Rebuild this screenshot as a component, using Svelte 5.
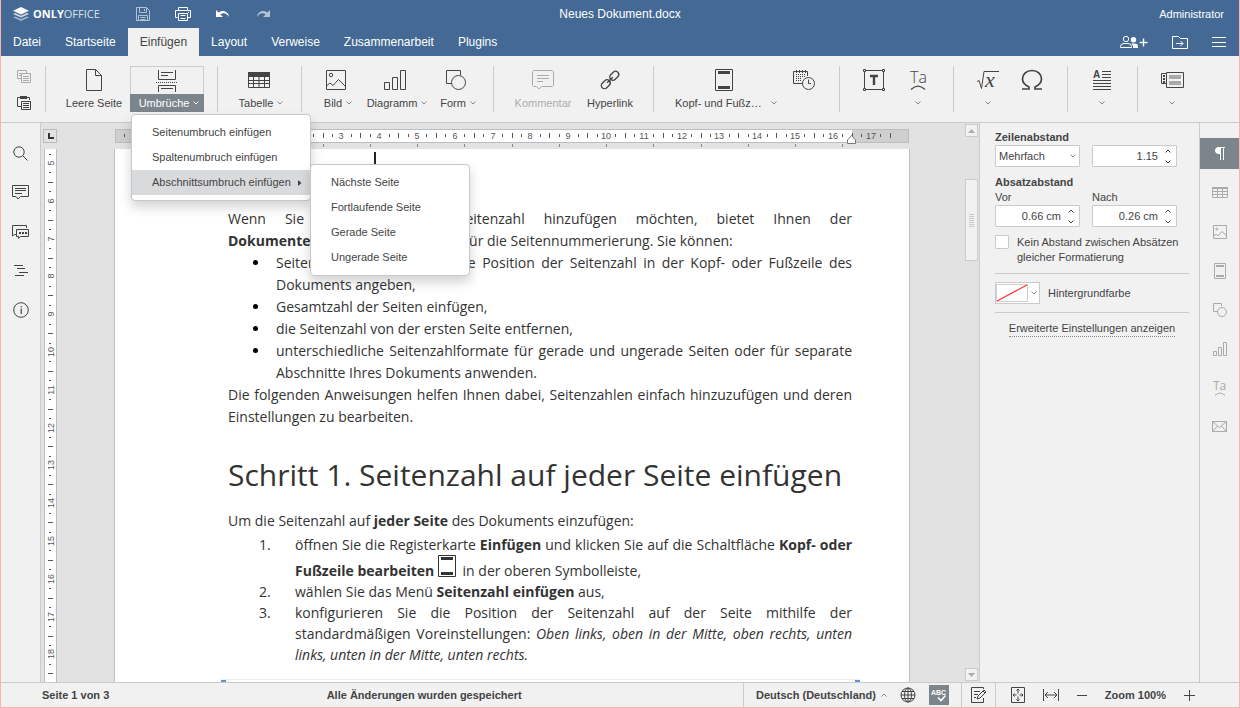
<script lang="ts">
  type Icon = { w: number; h: number; body: string };

  const line = 'fill="none" stroke="currentColor"';

  const icons: Record<string, Icon> = {
    logo: { w: 16, h: 14, body: '<path d="M8 0 16 3.7 8 7.4 0 3.7Z" fill="#fff"/><path d="M2 6 0 7 8 10.6 16 7 14 6 8 8.8Z" fill="#fff" opacity=".75"/><path d="M2 9.4 0 10.3 8 14 16 10.3 14 9.4 8 12.1Z" fill="#fff" opacity=".5"/>' },
    save: { w: 14, h: 14, body: `<path ${line} d="M.5.5H10.5L13.5 3.5V13.5H.5ZM3.5.5V5.5H10.5V.5M8.5 2V4M2.5 13.5V8.5H11.5V13.5M4.5 10.5H9.5M4.5 12.5H9.5"/>` },
    print: { w: 16, h: 14, body: `<path ${line} d="M3.5 3.5V.5H12.5V3.5M3.5 10.5H.5V3.5H15.5V10.5H12.5M3.5 6.5H12.5V13.5H3.5ZM5.5 8.5H10.5M5.5 11.5H10.5M13 5.5H14"/>` },
    undo: { w: 16, h: 10, body: '<path fill="currentColor" d="M1 1V8H8L5.3 5.4C8.5 3 12 4.5 14 8 13.8 2.5 7.5 0 3.6 3.6Z"/>' },
    redo: { w: 16, h: 10, body: '<path fill="currentColor" d="M15 1V8H8L10.7 5.4C7.5 3 4 4.5 2 8 2.2 2.5 8.5 0 12.4 3.6Z"/>' },
    users: { w: 28, h: 14, body: `<circle ${line} cx="6" cy="4" r="2.7"/><path ${line} d="M.5 12.5V11.5Q.5 8.5 4 8.5H8Q11.5 8.5 11.5 11.5V12.5Z"/><circle cx="13.5" cy="4.8" r="2.7" fill="currentColor"/><path fill="currentColor" d="M11 8.5H14.5Q18 8.5 18 11.5V13H13V11.5Q13 9.6 11 8.5Z"/><path ${line} stroke-width="1.4" d="M19.5 7.5H27.5M23.5 3.5V11.5"/>` },
    folder: { w: 16, h: 13, body: `<path ${line} d="M.5.5H6.5L8.5 2.5H15.5V12.5H.5ZM4 7.5H11M8.5 5 11 7.5 8.5 10"/>` },
    burger: { w: 14, h: 10, body: `<path ${line} d="M0 .5H14M0 5.5H14M0 9.5H14"/>` },
    copy: { w: 14, h: 13, body: `<path ${line} d="M4 8.5H.5V.5H9.5V3M2 3.5H4M2 5.5H4M4.5 3.5H13.5V12.5H4.5ZM6 6.5H12M6 8.5H12M6 10.5H12"/>` },
    paste: { w: 14, h: 14, body: `<path ${line} d="M4 10.5H.5V1.5H12.5V4M4.5 5.5H13.5V13.5H4.5ZM6 7.5H12M6 9.5H12M6 11.5H12"/><path fill="currentColor" d="M3 0H10V3H3Z"/>` },
    blank: { w: 16, h: 22, body: `<path ${line} d="M.5.5H9.5L15.5 6.5V21.5H.5ZM9.5.5V6.5H15.5"/>` },
    breaks: { w: 22, h: 22, body: `<path ${line} d="M2.5 0V9.5H19.5V0M5 2.5H17M5 5.5H12M2.5 22V15.5H19.5V22M5 18.5H17"/><path ${line} stroke-dasharray="1 1" d="M0 12.5H22"/>` },
    table: { w: 22, h: 16, body: `<path fill="currentColor" d="M0 0H22V5H0Z"/><path ${line} d="M.5 4V15.5H21.5V4M0 8.5H22M0 11.5H22M5.5 5V16M11 5V16M16.5 5V16"/>` },
    image: { w: 20, h: 20, body: `<path ${line} d="M.5.5H19.5V19.5H.5ZM.5 16 4 13 7 15.5 12.5 9.5 19.5 16.5"/><circle ${line} cx="5" cy="5" r="1.7"/>` },
    chart: { w: 22, h: 20, body: `<path ${line} d="M.5 12.5H5.5V19.5H.5ZM8.5 7.5H13.5V19.5H8.5ZM16.5.5H21.5V19.5H16.5Z"/>` },
    shape: { w: 20, h: 20, body: `<path ${line} d="M6 13.5H.5V.5H14.5V5"/><circle ${line} cx="12.5" cy="12.5" r="7"/>` },
    comment: { w: 22, h: 20, body: `<path ${line} d="M1.5.5H20.5L21.5 1.5V15.5L20.5 16.5H9.5L7 19 4.5 16.5H1.5L.5 15.5V1.5ZM5 5.5H17M5 8.5H17M5 11.5H11"/>` },
    link: { w: 20, h: 20, body: `<g ${line} stroke-width="1.3" transform="rotate(-45 10 10)"><rect x="-1" y="6.8" width="10" height="6.4" rx="3.2"/><rect x="11" y="6.8" width="10" height="6.4" rx="3.2"/><path d="M6 10H14"/></g>` },
    header: { w: 18, h: 22, body: `<path ${line} d="M.5.5H17.5V21.5H.5Z"/><path fill="currentColor" d="M3 2H15V5H3ZM3 17H15V20H3Z"/>` },
    date: { w: 22, h: 20, body: `<path ${line} d="M10 13.5H.5V1.5H14.5V6M3.5 0V3M6.5 0V3M9.5 0V3M12.5 0V3"/><path ${line} stroke-dasharray="1 1" d="M3 4.5H13M3 6.5H12M3 8.5H9M3 10.5H9"/><circle ${line} cx="15.5" cy="13.5" r="6"/><path ${line} d="M15.5 9.5V13.5H18"/>` },
    textbox: { w: 22, h: 22, body: `<path ${line} d="M3 1.5H19M3 20.5H19M1.5 3V19M20.5 3V19M.5.5H2.5V2.5H.5ZM19.5.5H21.5V2.5H19.5ZM.5 19.5H2.5V21.5H.5ZM19.5 19.5H21.5V21.5H19.5Z"/><path ${line} stroke-width="2.4" d="M7 7H15M11 7V16"/>` },
    textart: { w: 18, h: 22, body: `<text x="1" y="14" font-family="Open Sans, sans-serif" font-size="16" font-weight="300" fill="currentColor">Ta</text><path ${line} stroke-width="1.2" d="M2 20.5Q9 13.5 16 20.5"/>` },
    equation: { w: 22, h: 22, body: `<path ${line} d="M0 12.5 2 11.5 4.5 19.5 7 2.5H22"/><text x="8" y="18" font-family="Liberation Serif, serif" font-size="22" font-style="italic" fill="currentColor">x</text>` },
    omega: { w: 22, h: 22, body: `<path ${line} stroke-width="1.7" d="M1 20H8V18C4 16 1.500 13.500 1.500 10 1.500 5 5.500 1.500 11 1.500S20.500 5 20.500 10C20.500 13.500 18 16 14 18V20H21"/>` },
    dropcap: { w: 18, h: 20, body: `<text x="0" y="8" font-family="Liberation Sans, sans-serif" font-size="10" font-weight="700" fill="currentColor">A</text><path ${line} d="M9 1.500H18M9 4.500H18M9 7.500H18M0 10.500H18M0 13.500H18M0 16.500H18M0 19.500H18"/>` },
    control: { w: 23, h: 16, body: `<path ${line} d="M5.500.500H22.500V15.500H5.500ZM5 1.500H.500V11.500H5"/><path fill="currentColor" d="M2 3H4V5H2ZM2 6H4V8H2ZM2 9H4V11H2Z"/><path fill="#aaa" d="M8 3H20V7H8ZM8 9H20V13H8Z"/>` },
    search: { w: 15, h: 15, body: `<circle ${line} cx="6" cy="6" r="5.200"/><path ${line} d="M10 10 14.500 14.500"/>` },
    note: { w: 17, h: 15, body: `<path ${line} d="M.500.500H16.500V11.500H8.500L6 14 4 11.500H.500ZM3 3.500H14M3 5.500H14M3 8.500H10"/>` },
    chat: { w: 17, h: 14, body: `<path ${line} d="M4 9.500H2.500L.500 11V.500H14.500V3M4.500 4.500H16.500V11.500H8.500L6.500 13.500V11.500H4.500Z"/><path fill="currentColor" d="M7 7H9V9H7ZM10 7H12V9H10ZM13 7H15V9H13Z"/>` },
    outline: { w: 14, h: 12, body: `<path ${line} d="M0 .500H9M3 3.500H11M5 7.500H14M1 10.500H10"/>` },
    info: { w: 16, h: 16, body: `<circle ${line} cx="8" cy="8" r="7.300"/><path ${line} d="M8.200 6.500V12M8.200 4V5.300" stroke-width="1.200"/>` },
    pilcrow: { w: 10, h: 13, body: '<path fill="currentColor" d="M10 0V1H9V13H8V1H6V13H5V7H4C1.500 7 0 5.700 0 3.600S1.500 0 4 0Z"/>' },
    tableSmall: { w: 16, h: 11, body: `<path ${line} d="M.500.500H15.500V10.500H.500ZM0 1.500H16M0 4.500H16M0 7.500H16M5.500 2V11M10.500 2V11"/>` },
    imageSmall: { w: 14, h: 14, body: `<path ${line} d="M.500.500H13.500V13.500H.500ZM.500 11 3 9 5 11 9 6.500 13.500 10.500"/><circle ${line} cx="3.800" cy="4" r="1"/>` },
    headerSmall: { w: 12, h: 16, body: `<path ${line} d="M.500.500H11.500V15.500H.500Z"/><path fill="currentColor" d="M2 2H10V4H2ZM2 12H10V14H2Z"/>` },
    shapeSmall: { w: 14, h: 14, body: `<path ${line} d="M4 8.500H.500V.500H8.500V3"/><circle ${line} cx="9" cy="9" r="4.500"/>` },
    chartSmall: { w: 14, h: 14, body: `<path ${line} d="M.500 9.500H3.500V13.500H.500ZM5.500 5.500H8.500V13.500H5.500ZM10.500.500H13.500V13.500H10.500Z"/>` },
    textartSmall: { w: 14, h: 16, body: `<text x="0" y="10" font-family="Open Sans, sans-serif" font-size="12" fill="currentColor">Ta</text><path ${line} d="M2 15.500Q7 10.500 12 15.500"/>` },
    mail: { w: 15, h: 11, body: `<path ${line} d="M.500.500H14.500V10.500H.500ZM.500.500 7.500 6.500 14.500.500M.500 10.500 5.500 5M14.500 10.500 9.500 5"/>` },
    globe: { w: 16, h: 16, body: `<circle ${line} cx="8" cy="8" r="7"/><ellipse ${line} cx="8" cy="8" rx="3.500" ry="7"/><path ${line} d="M8 1V15M1 8H15M2 4.500H14M2 11.500H14"/>` },
    spell: { w: 18, h: 14, body: '<text x="1" y="7" font-family="Liberation Sans, sans-serif" font-size="7" fill="#fff">ABC</text><path d="M8 9.500 11 12.500 15.500 7.500" fill="none" stroke="#fff" stroke-width="1.600"/>' },
    track: { w: 16, h: 16, body: `<path ${line} d="M12.500 2V.500H.500V15.500H12.500V11M3 4.500H9M3 7.500H7M3 10.500H5M6 12 7 9 13 3 15 5 9 11ZM12 4 14 6"/>` },
    fitPage: { w: 14, h: 16, body: `<path ${line} d="M.500.500H13.500V15.500H.500ZM7 2V6.500M7 9.500V14M2 8H5.500M8.500 8H12M5.500 3.500 7 2 8.500 3.500M5.500 12.500 7 14 8.500 12.500M3.500 6.500 2 8 3.500 9.500M10.500 6.500 12 8 10.500 9.500"/>` },
    fitWidth: { w: 16, h: 12, body: `<path ${line} d="M.500 0V12M15.500 0V12M2 6H14M5 3 2 6 5 9M11 3 14 6 11 9"/>` },
    minus: { w: 10, h: 12, body: `<path ${line} d="M0 6.500H10"/>` },
    plus: { w: 11, h: 12, body: `<path ${line} d="M0 6.500H11M5.500 1V12"/>` },
    down: { w: 6, h: 4, body: `<path ${line} d="M.500.500 3 3 5.500.500"/>` },
    up: { w: 6, h: 4, body: `<path ${line} d="M.500 3.500 3 1 5.500 3.500"/>` },
    right: { w: 4, h: 6, body: '<path fill="currentColor" d="M0 0 3.500 3 0 6Z"/>' }
  };

  const tabs = ['Datei', 'Startseite', 'Einfügen', 'Layout', 'Verweise', 'Zusammenarbeit', 'Plugins'];

  const sections = [
    [
      { icon: 'blank', label: 'Leere Seite', size: 'l' },
      { icon: 'breaks', label: 'Umbrüche', size: 'xl', caret: true, menu: true }
    ],
    [{ icon: 'table', label: 'Tabelle', size: 'm', caret: true }],
    [
      { icon: 'image', label: 'Bild', size: 's', caret: true },
      { icon: 'chart', label: 'Diagramm', size: 'xl', caret: true },
      { icon: 'shape', label: 'Form', size: 'sm', caret: true }
    ],
    [
      { icon: 'comment', label: 'Kommentar', size: 'xl', disabled: true },
      { icon: 'link', label: 'Hyperlink', size: 'ml' }
    ],
    [
      { icon: 'header', label: 'Kopf- und Fußz…', size: 'wide', caret: true },
      { icon: 'date', title: 'Datum und Uhrzeit', size: 's' }
    ],
    [
      { icon: 'textbox', title: 'Textfeld', size: 's' },
      { icon: 'textart', title: 'TextArt', size: 's', caret: true }
    ],
    [
      { icon: 'equation', title: 'Formel', size: 's', caret: true },
      { icon: 'omega', title: 'Symbol', size: 's' }
    ],
    [{ icon: 'dropcap', title: 'Initialbuchstaben', size: 's', caret: true }],
    [{ icon: 'control', title: 'Inhaltssteuerelemente', size: 's', caret: true }]
  ] as { icon: string; label?: string; title?: string; size: string; caret?: boolean; menu?: boolean; disabled?: boolean }[][];

  const sectionBreaks = ['Nächste Seite', 'Fortlaufende Seite', 'Gerade Seite', 'Ungerade Seite'];

  const leftTools = [
    ['search', 'Suchen'],
    ['note', 'Kommentare'],
    ['chat', 'Chat'],
    ['outline', 'Navigation'],
    ['info', 'Über']
  ];

  const rightTools = [
    ['pilcrow', 'Absatz'],
    ['tableSmall', 'Tabelle'],
    ['imageSmall', 'Bild'],
    ['headerSmall', 'Kopfzeile'],
    ['shapeSmall', 'Form'],
    ['chartSmall', 'Diagramm'],
    ['textartSmall', 'TextArt'],
    ['mail', 'Serienbrief']
  ];

  // Rulers: 1 cm = 37.8 px at 100% zoom
  const cm = 37.8;
  const marginLeft = 113;
  const topOffset = -175;
  const hQuarters = Array.from({ length: 82 }, (_, i) => i - 11);
  const vQuarters = Array.from({ length: 56 }, (_, i) => i + 19);
  const tabStops = Array.from({ length: 14 }, (_, i) => Math.round(marginLeft + i * cm * 1.25));

  let activeTab = $state('Einfügen');
  let activePanel = $state('pilcrow');
  let menuOpen = $state(true);
  let spacing = $state('1.15');
  let before = $state('0.66 cm');
  let after = $state('0.26 cm');
  let noSpacing = $state(false);
</script>

{#snippet glyph(name: string)}
  {@const icon = icons[name]}
  <svg width={icon.w} height={icon.h} viewBox="0 0 {icon.w} {icon.h}" aria-hidden="true">{@html icon.body}</svg>
{/snippet}

<div class="app">
  <header>
    <div class="title-bar">
      <div class="quick">
        <a class="logo" href="#home">{@render glyph('logo')}<span><b>ONLY</b>OFFICE</span></a>
        <button class="dim" aria-label="Speichern">{@render glyph('save')}</button>
        <button aria-label="Drucken">{@render glyph('print')}</button>
        <button aria-label="Rückgängig">{@render glyph('undo')}</button>
        <button class="dim" aria-label="Wiederholen">{@render glyph('redo')}</button>
      </div>
      <div class="doc-name">Neues Dokument.docx</div>
      <div class="user">Administrator</div>
    </div>
    <div class="tab-bar">
      <nav>
        {#each tabs as tab}
          <button class="tab" class:active={activeTab === tab} onclick={() => (activeTab = tab)}>{tab}</button>
        {/each}
      </nav>
      <div class="head-tools">
        <button aria-label="Freigeben">{@render glyph('users')}</button>
        <button aria-label="Dateispeicherort öffnen">{@render glyph('folder')}</button>
        <button aria-label="Ansichtseinstellungen">{@render glyph('burger')}</button>
      </div>
    </div>
  </header>

  <div class="toolbar">
    <div class="clipboard">
      <button disabled aria-label="Kopieren">{@render glyph('copy')}</button>
      <button aria-label="Einfügen">{@render glyph('paste')}</button>
    </div>
    {#each sections as section}
      <div class="section">
        {#each section as item}
          <div class="slot {item.size}">
            <button
              class="tool"
              class:open={item.menu && menuOpen}
              disabled={item.disabled}
              aria-label={item.title}
              onclick={() => { if (item.menu) menuOpen = !menuOpen; }}
            >
              <span class="tool-icon">{@render glyph(item.icon)}</span>
              <span class="tool-label">
                {#if item.label}<span class="caption" class:with-caret={item.caret}>{item.label}</span>{/if}
                {#if item.caret}<span class="caret">{@render glyph('down')}</span>{/if}
              </span>
            </button>
            {#if item.menu && menuOpen}
              <ul class="menu">
                <li><button>Seitenumbruch einfügen</button></li>
                <li><button>Spaltenumbruch einfügen</button></li>
                <li class="current">
                  <button>Abschnittsumbruch einfügen {@render glyph('right')}</button>
                  <ul class="menu submenu">
                    {#each sectionBreaks as entry}
                      <li><button>{entry}</button></li>
                    {/each}
                  </ul>
                </li>
              </ul>
            {/if}
          </div>
        {/each}
      </div>
    {/each}
  </div>

  <main>
    <aside class="left-rail">
      {#each leftTools as [name, title]}
        <button aria-label={title}>{@render glyph(name)}</button>
      {/each}
    </aside>

    <div class="v-side">
      <button class="tab-type" aria-label="Tabstopp">
        <svg width="6" height="6" viewBox="0 0 6 6"><path d="M1 0V5H6" fill="none" stroke="#333" stroke-width="2" /></svg>
      </button>
      <div class="v-ruler">
        <svg width="11" height="530">
          {#each vQuarters as q}
            {@const y = Math.round(topOffset + (q * cm) / 4)}
            {#if q % 4 === 0}
              <text transform="translate(9 {y}) rotate(-90)" text-anchor="middle">{q / 4}</text>
            {:else if q % 2 === 0}
              <path d="M3 {y + 0.5}H8" />
            {:else}
              <path d="M4 {y + 0.5}H6" />
            {/if}
          {/each}
        </svg>
      </div>
    </div>

    <div class="canvas">
      <div class="h-ruler">
        <svg width="794" height="19">
          <rect x="0" y="0.5" width="793" height="13" fill="#cfcfcf" />
          <rect x={marginLeft} y="0.5" width="624" height="13" fill="#fff" />
          <path class="edge" d="M.5.5H793.5V13.5H.5Z" />
          {#each hQuarters as q}
            {@const x = Math.round(marginLeft + (q * cm) / 4)}
            {#if q % 4 === 0}
              {#if q !== 0}
                <text {x} y="10" text-anchor="middle">{Math.abs(q / 4)}</text>
              {/if}
            {:else if q % 2 === 0}
              <path d="M{x + 0.5} 4V9" />
            {:else}
              <path d="M{x + 0.5} 5V8" />
            {/if}
          {/each}
          {#each tabStops as x}
            <path class="stop" d="M{x + 0.5} 15V18" />
          {/each}
          <path class="marker" d="M732.5 14.500V11L736.500 6.500 740.500 11V14.500Z" />
        </svg>
      </div>

      <article class="page">
        <span class="cursor"></span>
        <p>
          <span class="full">Wenn Sie Dokument eine Seitenzahl hinzufügen möchten, bietet Ihnen der</span>
          <b>Dokumenteneditor</b> viele Optionen für die Seitennummerierung. Sie können:
        </p>
        <ul>
          <li>Seitenzahlen anlegen, um die Position der Seitenzahl in der Kopf- oder Fußzeile des Dokuments angeben,</li>
          <li>Gesamtzahl der Seiten einfügen,</li>
          <li>die Seitenzahl von der ersten Seite entfernen,</li>
          <li>unterschiedliche Seitenzahlformate für gerade und ungerade Seiten oder für separate Abschnitte Ihres Dokuments anwenden.</li>
        </ul>
        <p>Die folgenden Anweisungen helfen Ihnen dabei, Seitenzahlen einfach hinzuzufügen und deren Einstellungen zu bearbeiten.</p>
        <h1>Schritt 1. Seitenzahl auf jeder Seite einfügen</h1>
        <p>Um die Seitenzahl auf <b>jeder Seite</b> des Dokuments einzufügen:</p>
        <ol>
          <li>
            öffnen Sie die Registerkarte <b>Einfügen</b> und klicken Sie auf die Schaltfläche
            <b>Kopf- oder Fußzeile bearbeiten</b> <span class="inline-icon">{@render glyph('header')}</span> in der oberen Symbolleiste,
          </li>
          <li>wählen Sie das Menü <b>Seitenzahl einfügen</b> aus,</li>
          <li>
            konfigurieren Sie die Position der Seitenzahl auf der Seite mithilfe der standardmäßigen Voreinstellungen:
            <i>Oben links, oben in der Mitte, oben rechts, unten links, unten in der Mitte, unten rechts.</i>
          </li>
        </ol>
        <div class="frame"><span></span><span></span></div>
      </article>
    </div>

    <div class="scrollbar">
      <button aria-label="Nach oben"><svg width="7" height="4"><path d="M0 4 3.500 0 7 4Z" fill="#adadad" /></svg></button>
      <div class="track"><div class="thumb"></div></div>
      <button aria-label="Nach unten"><svg width="7" height="4"><path d="M0 0 3.500 4 7 0Z" fill="#adadad" /></svg></button>
    </div>

    <aside class="settings">
      <label class="strong" for="line-rule">Zeilenabstand</label>
      <div class="row">
        <div class="field">
          <select id="line-rule">
            <option>Mehrfach</option>
          </select>
          <span class="arrow">{@render glyph('down')}</span>
        </div>
        <div class="field">
          <input aria-label="Zeilenabstand Wert" bind:value={spacing} />
          <span class="spin">{@render glyph('up')}{@render glyph('down')}</span>
        </div>
      </div>
      <div class="strong group">Absatzabstand</div>
      <div class="row">
        <div class="col">
          <label for="before">Vor</label>
          <div class="field">
            <input id="before" bind:value={before} />
            <span class="spin">{@render glyph('up')}{@render glyph('down')}</span>
          </div>
        </div>
        <div class="col">
          <label for="after">Nach</label>
          <div class="field">
            <input id="after" bind:value={after} />
            <span class="spin">{@render glyph('up')}{@render glyph('down')}</span>
          </div>
        </div>
      </div>
      <label class="check">
        <input type="checkbox" bind:checked={noSpacing} />
        <span>Kein Abstand zwischen Absätzen gleicher Formatierung</span>
      </label>
      <hr />
      <div class="color-row">
        <button id="fill" class="color" aria-label="Hintergrundfarbe">
          <svg width="32" height="18"><path d="M.5.5H31.500V17.500H.5Z" fill="#fff" stroke="#cfcfcf" /><path d="M1 17 31 1" stroke="#f33" stroke-width="1.300" /></svg>
          <span class="caret">{@render glyph('down')}</span>
        </button>
        <label for="fill">Hintergrundfarbe</label>
      </div>
      <hr />
      <div class="more"><a href="#advanced">Erweiterte Einstellungen anzeigen</a></div>
    </aside>

    <aside class="right-rail">
      {#each rightTools as [name, title]}
        <button class:active={activePanel === name} aria-label={title} onclick={() => (activePanel = name)}>{@render glyph(name)}</button>
      {/each}
    </aside>
  </main>

  <footer>
    <div class="page-count">Seite 1 von 3</div>
    <div class="message">Alle Änderungen wurden gespeichert</div>
    <div class="cell">
      <button class="lang">Deutsch (Deutschland) <span class="caret">{@render glyph('up')}</span></button>
      <button aria-label="Dokumentsprache">{@render glyph('globe')}</button>
      <button class="spell" aria-label="Rechtschreibprüfung">{@render glyph('spell')}</button>
    </div>
    <div class="cell narrow"><button aria-label="Änderungen nachverfolgen">{@render glyph('track')}</button></div>
    <div class="cell zoom">
      <button aria-label="Seite anpassen">{@render glyph('fitPage')}</button>
      <button aria-label="Breite anpassen">{@render glyph('fitWidth')}</button>
      <button aria-label="Verkleinern">{@render glyph('minus')}</button>
      <button>Zoom 100%</button>
      <button aria-label="Vergrößern">{@render glyph('plus')}</button>
    </div>
  </footer>
</div>

<style>
  .app {
    --blue: #446995;
    --bg: #f1f1f1;
    --line: #cbcbcb;
    --dark: #7d858c;
    box-sizing: border-box;
    display: flex;
    flex-direction: column;
    height: 100vh;
    border: 1px solid #f9b5ac;
    border-top: 0;
    background: var(--bg);
    color: #444;
    font: 11px/15px "Liberation Sans", Arial, sans-serif;
  }

  .app :global(*) {
    box-sizing: border-box;
  }

  svg {
    display: block;
    flex: none;
    overflow: visible;
  }

  button {
    display: flex;
    align-items: center;
    justify-content: center;
    padding: 0;
    border: 0;
    background: none;
    color: inherit;
    font: inherit;
    white-space: nowrap;
  }

  .caret {
    color: #888;
  }

  /* Header */
  header {
    background: var(--blue);
    color: #fff;
  }

  .title-bar {
    display: grid;
    grid-template-columns: 1fr auto 1fr;
    align-items: center;
    height: 28px;
    padding: 0 12px;
  }

  .quick {
    display: flex;
    align-items: center;
    gap: 24px;
  }

  .quick button {
    width: 16px;
  }

  .logo {
    display: flex;
    align-items: center;
    gap: 4px;
    width: 98px;
    color: #dbe3ec;
    font: 11px/16px "Open Sans", sans-serif;
    text-decoration: none;
  }

  .logo b {
    color: #fff;
  }

  .dim {
    opacity: 0.6;
  }

  .doc-name {
    font-size: 12px;
  }

  .user {
    padding-right: 3px;
    text-align: right;
  }

  .tab-bar,
  nav {
    display: flex;
    height: 28px;
  }

  .tab-bar {
    justify-content: space-between;
  }

  .tab {
    padding: 0 12px;
    font-size: 12px;
  }

  .tab.active {
    background: var(--bg);
    color: #444;
  }

  .head-tools {
    display: flex;
    align-items: center;
    gap: 24px;
    padding-right: 13px;
  }

  /* Toolbar */
  .toolbar {
    display: flex;
    padding: 10px 0;
    border-bottom: 1px solid var(--line);
  }

  .clipboard {
    display: flex;
    flex-direction: column;
    justify-content: space-between;
    width: 44px;
    padding: 4px 14px 2px 15px;
  }

  button:disabled {
    opacity: 0.4;
  }

  .section {
    display: flex;
    padding: 0 13px 0 12px;
    border-left: 1px solid var(--line);
  }

  .slot {
    position: relative;
    width: 44px;
  }

  .slot.sm {
    width: 48px;
  }

  .slot.m {
    width: 58px;
  }

  .slot.ml {
    width: 60px;
  }

  .slot.l {
    width: 72px;
  }

  .slot.xl {
    width: 74px;
  }

  .slot.wide {
    width: 116px;
  }

  .tool {
    flex-direction: column;
    width: 100%;
    height: 46px;
  }

  .tool-icon,
  .tool-label {
    display: flex;
    align-items: center;
    justify-content: center;
    width: 100%;
    height: 28px;
  }

  .tool-label {
    gap: 4px;
    height: 18px;
  }

  .with-caret {
    padding-left: 4px;
  }

  .wide .caption {
    min-width: 96px;
    text-align: left;
  }

  .tool.open .tool-icon {
    border: 1px solid var(--line);
    border-bottom: 0;
  }

  .tool.open .tool-label,
  .tool.open .caret {
    background: var(--dark);
    color: #fff;
  }

  .menu {
    position: absolute;
    top: 48px;
    left: 1px;
    z-index: 10;
    width: 180px;
    margin: 0;
    padding: 5px 0;
    border: 1px solid #c8c8c8;
    border-radius: 4px;
    background: #fff;
    box-shadow: 0 6px 12px rgba(0, 0, 0, 0.18);
    list-style: none;
  }

  .menu li {
    position: relative;
  }

  .menu li button {
    justify-content: flex-start;
    gap: 7px;
    width: 100%;
    height: 25px;
    padding-left: 20px;
  }

  .menu .current > button {
    background: #d8dadc;
  }

  .submenu {
    top: -6px;
    left: 178px;
    width: 160px;
  }

  /* Workspace */
  main {
    display: flex;
    flex: 1;
    min-height: 0;
    overflow: hidden;
  }

  .left-rail {
    display: flex;
    flex-direction: column;
    gap: 8px;
    width: 40px;
    padding-top: 15px;
    border-right: 1px solid var(--line);
  }

  .left-rail button,
  .right-rail button {
    width: 100%;
    height: 31px;
  }

  .v-side {
    display: flex;
    flex-direction: column;
    align-items: center;
    gap: 6px;
    width: 18px;
    padding-top: 6px;
    background: #e2e2e2;
  }

  .tab-type {
    flex: none;
    align-items: flex-end;
    width: 14px;
    height: 14px;
    padding: 0 0 3px 2px;
    border: 1px solid #bbb;
  }

  .v-ruler {
    flex: 1;
    min-height: 0;
    overflow: hidden;
    border: solid #bbbec2;
    border-width: 0 1px;
    background: #fff;
  }

  .v-ruler path,
  .h-ruler path {
    fill: none;
    stroke: #555;
  }

  .v-ruler text,
  .h-ruler text {
    fill: #555;
    font-size: 9px;
  }

  .h-ruler .edge {
    stroke: #bbbec2;
  }

  .h-ruler .stop {
    stroke: #888;
  }

  .h-ruler .marker {
    fill: #fff;
    stroke: #777;
  }

  .canvas {
    display: flex;
    flex: 1;
    flex-direction: column;
    align-items: center;
    min-width: 0;
    padding-top: 6px;
    overflow: hidden;
    background: #e2e2e2;
  }

  .h-ruler {
    flex: none;
    width: 794px;
    height: 20px;
  }

  .page {
    position: relative;
    flex: 1 0 auto;
    width: 796px;
    padding: 59px 57px 0 113px;
    border: solid #bbbec2;
    border-width: 0 1px;
    background: #fff;
    color: #333;
    font: 14px/22px "Open Sans", sans-serif;
    text-align: justify;
  }

  .cursor {
    position: absolute;
    top: 3px;
    left: 259px;
    width: 2px;
    height: 22px;
    background: #222;
  }

  .page p,
  .page ul,
  .page ol {
    margin: 0;
  }

  .full {
    display: block;
    text-align-last: justify;
  }

  .page ul {
    padding-left: 42px;
  }

  .page ul li {
    padding-left: 6px;
  }

  .page li::marker {
    color: #000;
  }

  .page h1 {
    margin: 25px 0 13px;
    font-size: 30px;
    font-weight: 400;
    line-height: 44px;
    text-align: left;
  }

  .page ol {
    padding: 2px 0 0 67px;
    line-height: 21px;
    list-style: none;
  }

  .page ol li {
    counter-increment: step;
  }

  .page ol li::before {
    display: inline-block;
    width: 36px;
    margin-left: -36px;
    content: counter(step) ".";
  }

  .inline-icon svg {
    display: inline-block;
    margin-right: 3px;
    vertical-align: -1px;
  }

  .frame {
    display: flex;
    justify-content: space-between;
    margin: 14px -8px 0 -7px;
    border-top: 1px solid #eee;
  }

  .frame span {
    width: 5px;
    height: 5px;
    background: #5b92cf;
  }

  .scrollbar {
    display: flex;
    flex-direction: column;
    width: 14px;
    padding: 1px 2px 1px 0;
    background: #e2e2e2;
  }

  .scrollbar button,
  .thumb {
    flex: none;
    width: 13px;
    height: 13px;
    border: 1px solid var(--line);
    background: var(--bg);
  }

  .track {
    flex: 1;
    padding-top: 42px;
  }

  .thumb {
    height: 82px;
    padding: 34px 3px;
  }

  .thumb::before {
    display: block;
    height: 13px;
    background: repeating-linear-gradient(#cbcbcb 0 1px, transparent 1px 2px);
    content: "";
  }

  /* Right settings panel */
  .settings {
    width: 221px;
    padding: 7px 10px 0 15px;
    border: solid var(--line);
    border-width: 0 1px;
  }

  .settings label,
  .group {
    display: block;
  }

  .strong {
    font-weight: 700;
  }

  .group {
    margin-top: 8px;
  }

  .row {
    display: flex;
    gap: 12px;
  }

  .field {
    position: relative;
    width: 85px;
  }

  .field select,
  .field input {
    display: block;
    width: 100%;
    height: 22px;
    margin: 0;
    padding: 0 18px 0 3px;
    border: 1px solid var(--line);
    border-radius: 1px;
    outline: 0;
    background: #fff;
    color: #444;
    font: inherit;
    appearance: none;
  }

  .field input {
    text-align: right;
  }

  .arrow,
  .spin {
    position: absolute;
    top: 0;
    right: 4px;
    display: flex;
    flex-direction: column;
    justify-content: center;
    height: 22px;
    pointer-events: none;
  }

  .arrow {
    color: #888;
  }

  .spin {
    right: 6px;
    gap: 7px;
  }

  .settings .check {
    display: flex;
    gap: 8px;
    margin-top: 8px;
  }

  .check input {
    flex: none;
    width: 14px;
    height: 14px;
    margin: 0;
    border: 1px solid var(--line);
    border-radius: 1px;
    background: #fff;
    appearance: none;
  }

  hr {
    height: 1px;
    margin: 8px 0;
    border: 0;
    background: var(--line);
  }

  .color-row {
    display: flex;
    align-items: center;
    gap: 8px;
  }

  .color {
    gap: 3px;
    width: 45px;
    height: 22px;
    padding-right: 2px;
    border: 1px solid var(--line);
    background: #fff;
  }

  .more {
    text-align: center;
  }

  .more a {
    display: inline-block;
    border-bottom: 1px dotted #888;
    color: inherit;
    text-decoration: none;
  }

  .right-rail {
    display: flex;
    flex-direction: column;
    gap: 8px;
    width: 39px;
    padding-top: 15px;
    color: #aaa;
  }

  .right-rail .active {
    background: var(--dark);
    color: #fff;
  }

  /* Status bar */
  footer {
    display: flex;
    align-items: center;
    height: 25px;
    border-top: 1px solid var(--line);
    font-weight: 700;
  }

  .page-count {
    padding-left: 41px;
  }

  .message {
    flex: 1;
    padding-right: 4px;
    text-align: center;
  }

  .cell {
    display: flex;
    align-items: center;
    gap: 13px;
    height: 100%;
    padding: 0 12px;
    border-left: 1px solid var(--line);
  }

  .narrow {
    padding: 0 8px 0 9px;
  }

  .lang {
    gap: 5px;
  }

  .spell {
    width: 20px;
    height: 20px;
    background: var(--dark);
  }

  .zoom {
    gap: 18px;
    padding: 0 44px 0 15px;
  }
</style>
